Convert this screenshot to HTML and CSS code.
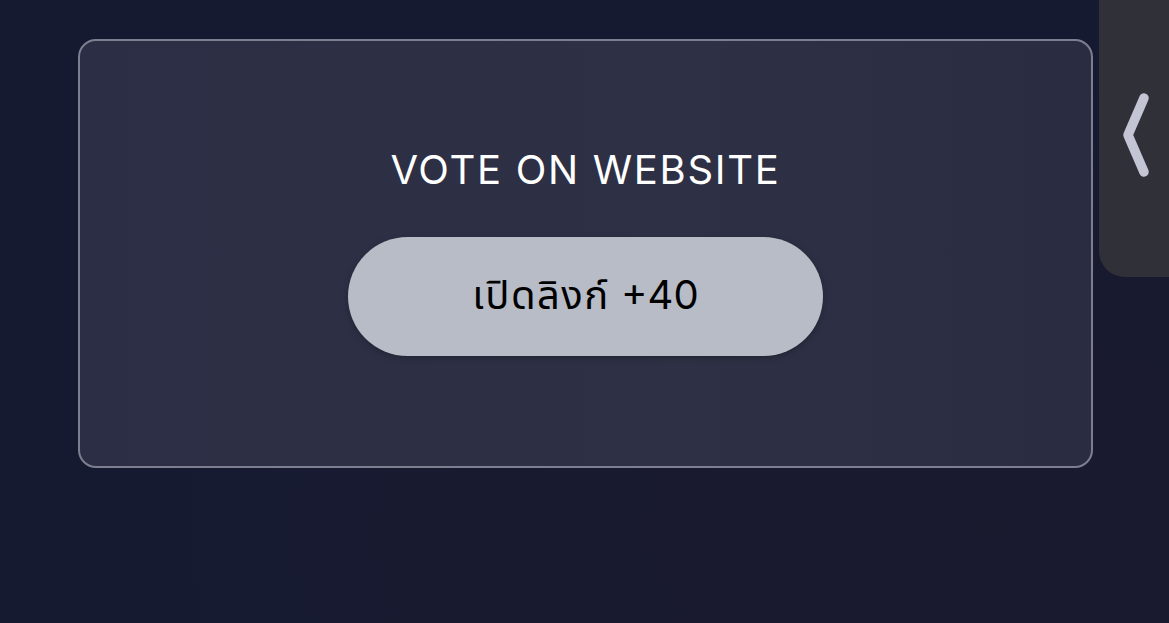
FILE: index.html
```html
<!DOCTYPE html>
<html lang="th">
<head>
<meta charset="utf-8">
<link rel="stylesheet" href="styles.css">
</head>
<body>
<main class="page">
  <section class="card">
    <h2 class="title">VOTE ON WEBSITE</h2>
    <button class="btn"><span class="th">เปิดลิงก์</span> +40</button>
  </section>
</main>
<aside class="handle">
  <svg class="chev" width="40" height="100" viewBox="0 0 40 100">
    <path d="M30 14 L14 51 L30 88" fill="none" stroke="#c3c4d4" stroke-width="9.5" stroke-linecap="round" stroke-linejoin="round"/>
  </svg>
</aside>
</body>
</html>
```
FILE: styles.css
```css
html, body {
  margin: 0;
  padding: 0;
  height: 100%;
}
body {
  background: radial-gradient(ellipse at 85% 85%, #1a1a2f 0%, #161a30 60%);
  background-color: #161a30;
  font-family: Inter, "Noto Sans Thai", "Noto Sans", sans-serif;
  overflow: hidden;
}
.page {
  padding: 39px 0 0 78px;
}
.card {
  box-sizing: border-box;
  width: 1015px;
  height: 429px;
  border: 2px solid #7d7e8f;
  border-radius: 18px;
  background: linear-gradient(90deg, #2c2e45 0%, #2e3045 60%, #2a2c42 100%);
  display: flex;
  flex-direction: column;
  align-items: center;
  padding-top: 105px;
}
.title {
  margin: 0;
  color: #ffffff;
  font-weight: 400;
  font-size: 40px;
  letter-spacing: 1.7px;
  line-height: 48px;
}
.btn {
  margin-top: 43px;
  width: 475px;
  height: 119px;
  border: none;
  border-radius: 60px;
  background: #b8bcc6;
  color: #000;
  font-family: Inter, "Noto Sans Thai", "Noto Sans", sans-serif;
  font-size: 40px;
  font-weight: 400;
  box-shadow: 0 2px 6px rgba(0,0,0,0.25);
  cursor: pointer;
}
.th {
  letter-spacing: 1.5px;
}
.handle {
  position: absolute;
  top: -30px;
  left: 1099px;
  width: 120px;
  height: 307px;
  background: #2f3038;
  border-radius: 26px;
}
.chev {
  position: absolute;
  left: 15px;
  top: 114px;
}
```
